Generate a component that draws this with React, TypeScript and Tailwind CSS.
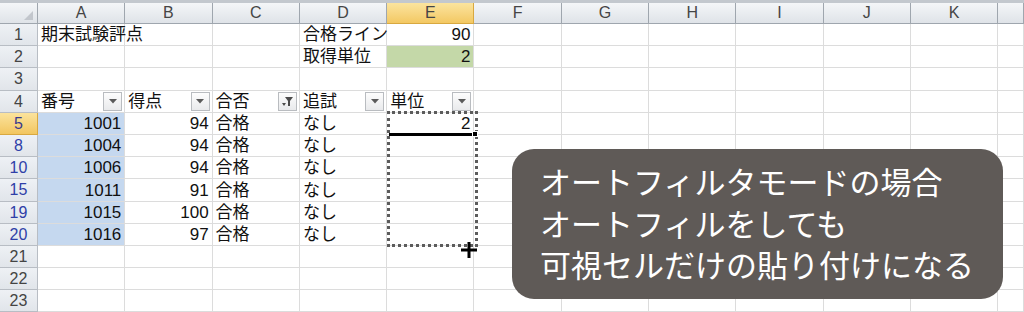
const cols = ["A", "B", "C", "D", "E", "F", "G", "H", "I", "J", "K", ""];

const jp = "font-['Noto_Sans_CJK_JP','Noto_Sans',sans-serif]";
const cellFont = "font-['Liberation_Sans','Noto_Sans_CJK_JP',sans-serif]";

type Cell = { text?: string; right?: boolean; bg?: string; filter?: "plain" | "active" };

function FilterButton({ active }: { active?: boolean }) {
  return (
    <span className="absolute right-[2px] top-[1px] z-10 flex h-[19px] w-[19px] items-center justify-center border border-[#b9bcc0] bg-gradient-to-b from-[#fdfdfd] to-[#e9eaec]">
      {active ? (
        <svg width="13" height="11" viewBox="0 0 13 11">
          <path d="M4 1h8L9 5v5H7V5z" fill="#4b4b4b" />
          <path d="M1 7l2 3 2-3z" fill="#4b4b4b" />
        </svg>
      ) : (
        <svg width="10" height="6" viewBox="0 0 10 6">
          <path d="M1 1h8L5 5.5z" fill="#5a5a5a" />
        </svg>
      )}
    </span>
  );
}

function Row({ num, cells, numColor = "text-[#444]", hl }: { num: string; cells: Cell[]; numColor?: string; hl?: boolean }) {
  return (
    <div className="grid h-[22.2px] grid-cols-[38px_repeat(11,87.3px)_1fr]">
      <div
        className={`flex items-center justify-center border-r border-b pt-[1px] text-[16px] leading-[20px] ${
          hl ? "border-[#d8a840] bg-gradient-to-b from-[#fbe39c] to-[#f2c65f]" : "border-[#b8bdc4] bg-gradient-to-b from-[#eef1f5] to-[#e1e5ea]"
        } ${numColor} font-['Liberation_Sans',sans-serif]`}
      >
        {num}
      </div>
      {cols.map((_, i) => {
        const c = cells[i] || {};
        return (
          <div
            key={i}
            className={`relative flex items-end whitespace-nowrap border-r border-b border-[#dcdcdc] px-[3px] text-[17px] text-[#111] ${cellFont} ${
              c.right ? "justify-end" : ""
            } ${c.bg || "bg-white"}`}
          >
            {c.text && <span className="relative z-10 block leading-[20px]">{c.text}</span>}
            {c.filter && <FilterButton active={c.filter === "active"} />}
          </div>
        );
      })}
    </div>
  );
}

const data = [
  ["5", "1001", "94", "2"],
  ["8", "1004", "94", ""],
  ["10", "1006", "94", ""],
  ["15", "1011", "91", ""],
  ["19", "1015", "100", ""],
  ["20", "1016", "97", ""],
];

const blue = "bg-[#c5d8ef]";

export default function App() {
  return (
    <div className="relative h-[312px] w-[1024px] overflow-hidden bg-white">
      <div className="h-[3px] bg-[#c3c8ce]" />
      <div className="grid h-[21px] grid-cols-[38px_repeat(11,87.3px)_1fr] font-['Liberation_Sans',sans-serif] text-[16px] leading-[20px] text-[#454545]">
        <div className="relative border-r border-b border-[#9fa6ae] bg-gradient-to-b from-[#f4f6f8] to-[#dfe3e8]">
          <svg className="absolute bottom-[3px] right-[4px]" width="9" height="9" viewBox="0 0 9 9">
            <path d="M9 0v9H0z" fill="#c2c6cc" />
          </svg>
        </div>
        {cols.map((c, i) => (
          <div
            key={i}
            className={`flex items-center justify-center border-r border-b ${
              c === "E" ? "border-[#d8a840] bg-gradient-to-b from-[#fbe49e] to-[#f3c862]" : "border-[#9fa6ae] bg-gradient-to-b from-[#f4f6f8] to-[#dfe3e8]"
            }`}
          >
            {c}
          </div>
        ))}
      </div>

      <Row num="1" cells={[{ text: "期末試験評点" }, {}, {}, { text: "合格ライン" }, { text: "90", right: true }]} />
      <Row num="2" cells={[{}, {}, {}, { text: "取得単位" }, { text: "2", right: true, bg: "bg-[#c4d8a8]" }]} />
      <Row num="3" cells={[]} />
      <Row
        num="4"
        cells={[
          { text: "番号", filter: "plain" },
          { text: "得点", filter: "plain" },
          { text: "合否", filter: "active" },
          { text: "追試", filter: "plain" },
          { text: "単位", filter: "plain" },
        ]}
      />
      {data.map(([n, id, score, unit], i) => (
        <Row
          key={n}
          num={n}
          hl={i === 0}
          numColor={i === 0 ? "text-[#3a3a8c]" : "text-[#2f3fa8]"}
          cells={[
            { text: id, right: true, bg: blue },
            { text: score, right: true },
            { text: "合格" },
            { text: "なし" },
            { text: unit, right: true },
          ]}
        />
      ))}
      <Row num="21" cells={[]} />
      <Row num="22" cells={[]} />
      <Row num="23" cells={[]} />

      {/* copy marquee on E5:E20 */}
      <div className="pointer-events-none absolute left-[387px] top-[111px] z-20 h-[136px] w-[91px] border-[3px] border-dotted border-[#5c5c5c]" />
      <div className="absolute left-[389px] top-[133px] z-20 h-[3px] w-[84px] bg-black" />
      <div className="absolute left-[472px] top-[131px] z-20 h-[6px] w-[6px] border border-white bg-black" />
      <svg className="absolute left-[461px] top-[242px] z-20" width="16" height="16" viewBox="0 0 16 16">
        <path d="M6.5 0h3v6.5H16v3H9.5V16h-3V9.5H0v-3h6.5z" fill="#000" />
      </svg>

      {/* caption */}
      <div
        className={`absolute left-[512px] top-[149px] z-20 flex h-[150px] w-[491px] flex-col justify-center rounded-[22px] bg-[#5f5a57] pb-[3px] pl-[28px] text-[31px] leading-[41.5px] text-white ${jp}`}
      >
        <div>オートフィルタモードの場合</div>
        <div>オートフィルをしても</div>
        <div>可視セルだけの貼り付けになる</div>
      </div>
    </div>
  );
}
